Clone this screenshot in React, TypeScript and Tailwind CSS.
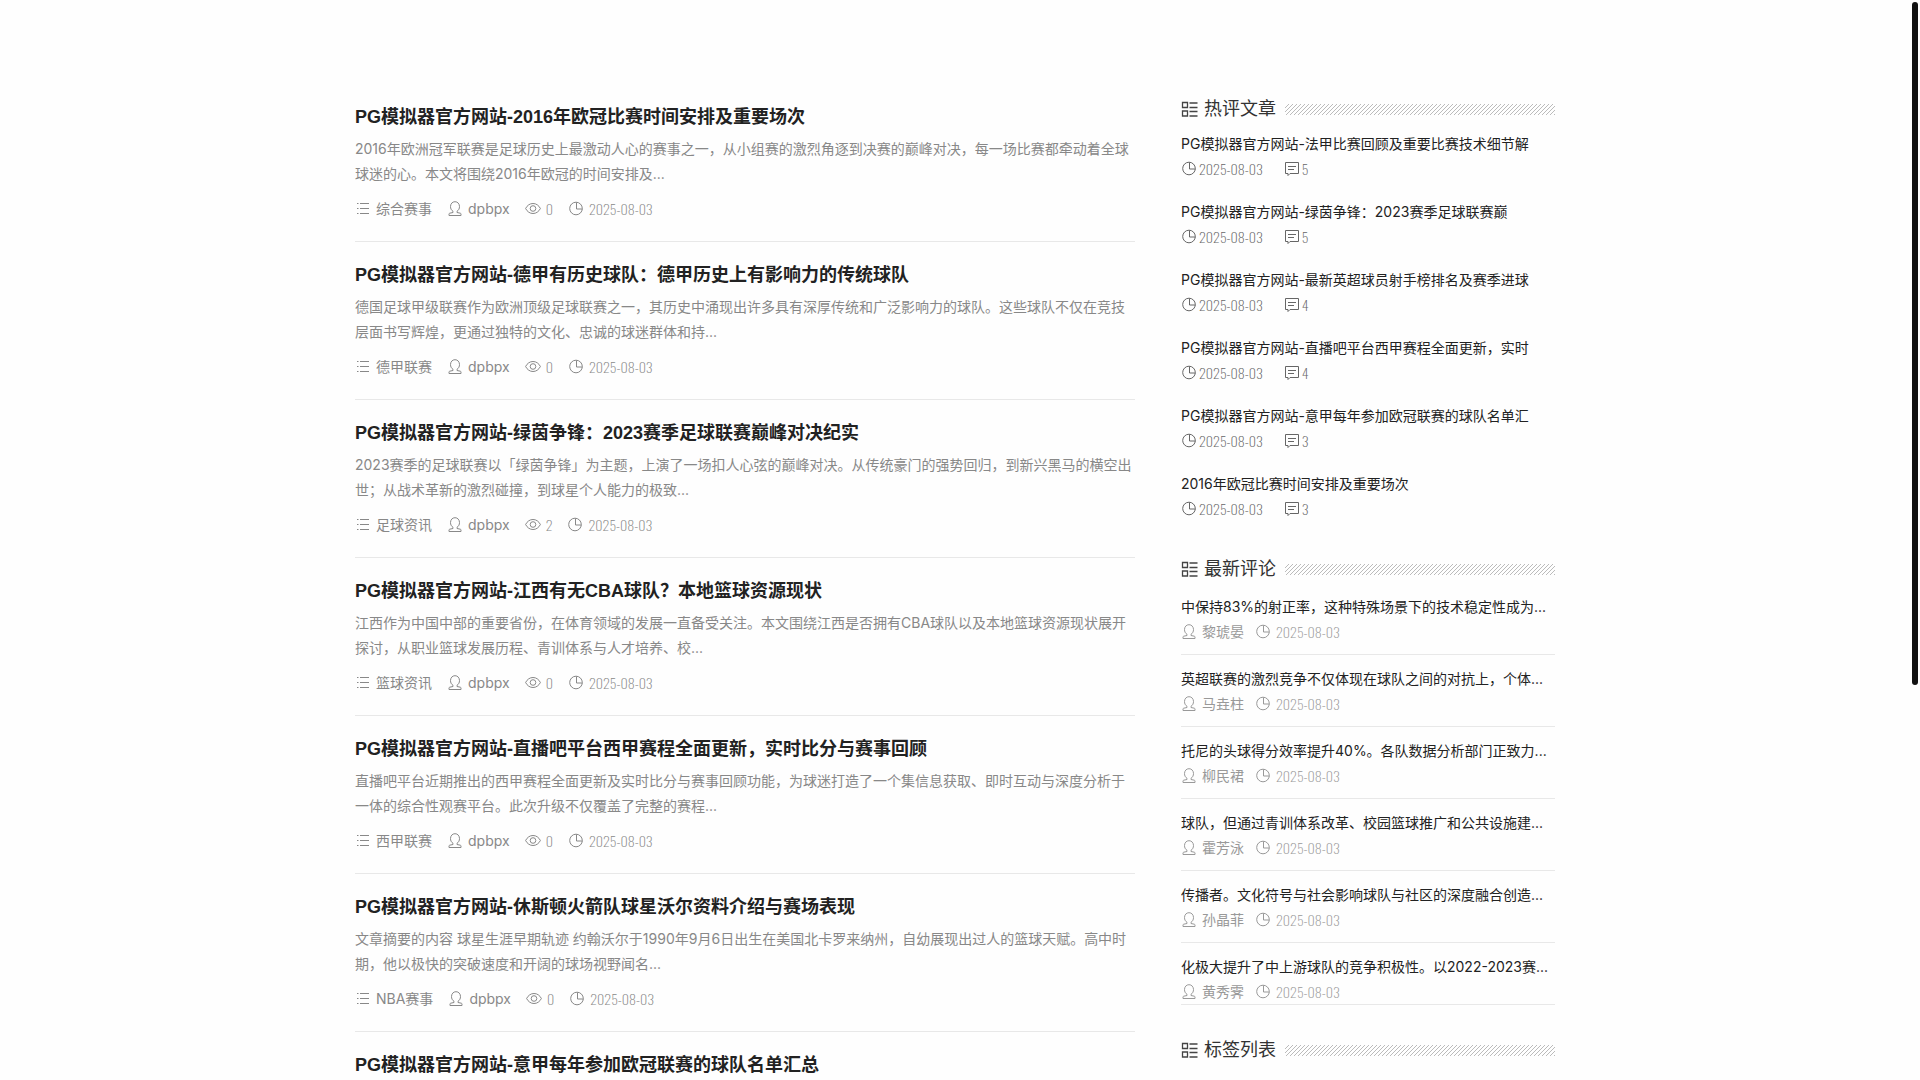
import type { ReactNode } from "react"

const articles = [
  {
    title: "PG模拟器官方网站-2016年欧冠比赛时间安排及重要场次",
    summary: "2016年欧洲冠军联赛是足球历史上最激动人心的赛事之一，从小组赛的激烈角逐到决赛的巅峰对决，每一场比赛都牵动着全球球迷的心。本文将围绕2016年欧冠的时间安排及...",
    category: "综合赛事",
    views: 0,
  },
  {
    title: "PG模拟器官方网站-德甲有历史球队：德甲历史上有影响力的传统球队",
    summary: "德国足球甲级联赛作为欧洲顶级足球联赛之一，其历史中涌现出许多具有深厚传统和广泛影响力的球队。这些球队不仅在竞技层面书写辉煌，更通过独特的文化、忠诚的球迷群体和持...",
    category: "德甲联赛",
    views: 0,
  },
  {
    title: "PG模拟器官方网站-绿茵争锋：2023赛季足球联赛巅峰对决纪实",
    summary: "2023赛季的足球联赛以「绿茵争锋」为主题，上演了一场扣人心弦的巅峰对决。从传统豪门的强势回归，到新兴黑马的横空出世；从战术革新的激烈碰撞，到球星个人能力的极致...",
    category: "足球资讯",
    views: 2,
  },
  {
    title: "PG模拟器官方网站-江西有无CBA球队？本地篮球资源现状",
    summary: "江西作为中国中部的重要省份，在体育领域的发展一直备受关注。本文围绕江西是否拥有CBA球队以及本地篮球资源现状展开探讨，从职业篮球发展历程、青训体系与人才培养、校...",
    category: "篮球资讯",
    views: 0,
  },
  {
    title: "PG模拟器官方网站-直播吧平台西甲赛程全面更新，实时比分与赛事回顾",
    summary: "直播吧平台近期推出的西甲赛程全面更新及实时比分与赛事回顾功能，为球迷打造了一个集信息获取、即时互动与深度分析于一体的综合性观赛平台。此次升级不仅覆盖了完整的赛程...",
    category: "西甲联赛",
    views: 0,
  },
  {
    title: "PG模拟器官方网站-休斯顿火箭队球星沃尔资料介绍与赛场表现",
    summary: "文章摘要的内容 球星生涯早期轨迹 约翰沃尔于1990年9月6日出生在美国北卡罗来纳州，自幼展现出过人的篮球天赋。高中时期，他以极快的突破速度和开阔的球场视野闻名...",
    category: "NBA赛事",
    views: 0,
  },
  {
    title: "PG模拟器官方网站-意甲每年参加欧冠联赛的球队名单汇总",
  },
]

const hotPosts = [
  { title: "PG模拟器官方网站-法甲比赛回顾及重要比赛技术细节解", replies: 5 },
  { title: "PG模拟器官方网站-绿茵争锋：2023赛季足球联赛巅", replies: 5 },
  { title: "PG模拟器官方网站-最新英超球员射手榜排名及赛季进球", replies: 4 },
  { title: "PG模拟器官方网站-直播吧平台西甲赛程全面更新，实时", replies: 4 },
  { title: "PG模拟器官方网站-意甲每年参加欧冠联赛的球队名单汇", replies: 3 },
  { title: "2016年欧冠比赛时间安排及重要场次", replies: 3 },
]

const comments = [
  { text: "中保持83%的射正率，这种特殊场景下的技术稳定性成为...", author: "黎琥晏" },
  { text: "英超联赛的激烈竞争不仅体现在球队之间的对抗上，个体...", author: "马垚柱" },
  { text: "托尼的头球得分效率提升40%。各队数据分析部门正致力...", author: "柳民裙" },
  { text: "球队，但通过青训体系改革、校园篮球推广和公共设施建...", author: "霍芳泳" },
  { text: "传播者。文化符号与社会影响球队与社区的深度融合创造...", author: "孙晶菲" },
  { text: "化极大提升了中上游球队的竞争积极性。以2022-2023赛...", author: "黄秀霁" },
]

const DATE = "2025-08-03"

function Icon({ children }: { children: ReactNode }) {
  return (
    <svg viewBox="0 0 16 16" fill="none" stroke="currentColor" aria-hidden="true" className="size-4 shrink-0">
      {children}
    </svg>
  )
}

const ListIcon = () => (
  <Icon>
    <path d="M2 2.5h1.500M5 2.5h9M2 7.5h1.500M5 7.5h9M2 12.5h1.500M5 12.5h9" />
  </Icon>
)

const UserIcon = () => (
  <Icon>
    <path d="M6 10.300C4.300 9.300 3.500 7.400 3.500 5.600 3.500 2.700 5.400.700 8 .700s4.500 2 4.500 4.900c0 1.800-.8 3.700-2.500 4.700v1.200l3.300.7c.5.100.7.500.7.900v1.400H2v-1.400c0-.4.2-.8.700-.9L6 11.500z" />
  </Icon>
)

const EyeIcon = () => (
  <Icon>
    <path d="M.6 7.500C2.300 4.300 4.800 2.500 8 2.500s5.700 1.800 7.400 5C13.700 10.700 11.200 12.500 8 12.500S2.300 10.700.6 7.500z" />
    <circle cx="8" cy="7.500" r="2.800" />
  </Icon>
)

const ClockIcon = () => (
  <Icon>
    <circle cx="8" cy="7.500" r="6.300" />
    <path d="M8.500 1.500v6.500h6" />
  </Icon>
)

const CommentIcon = () => (
  <Icon>
    <path d="M1.500 1.500h13v11H6l-2 2v-2H1.500zM4 5.500h8M4 8.500h6" />
  </Icon>
)

function WidgetTitle({ children }: { children: ReactNode }) {
  return (
    <div className="flex h-[27px] items-center">
      <svg viewBox="0 0 17 16" fill="none" stroke="currentColor" strokeWidth="1.300" aria-hidden="true" className="mt-px mr-1.5 h-4 w-[17px] shrink-0 text-[#444]">
        <path d="M1.500 1.500h5v5h-5zM1.500 10h5v5h-5zM8.500 2h8M8.500 6.500h8M8.500 10.500h8M8.500 15h8" />
      </svg>
      <h2 className="text-lg leading-[27px] text-[#333]">{children}</h2>
      <div className="mt-0.5 ml-[9px] h-[11px] flex-1 bg-[linear-gradient(135deg,transparent_40%,#bbb_40%,#bbb_60%,transparent_60%)] bg-size-[4px_4px]" />
    </div>
  )
}

function Num({ children }: { children: ReactNode }) {
  return (
    <span className="font-['Oswald','Roboto_Condensed','Roboto',sans-serif] text-sm font-extralight">
      {children}
    </span>
  )
}

export default function App() {
  return (
    <div className="h-screen overflow-hidden bg-[#fefefe] pr-2.5 font-['Inter','Noto_Sans_CJK_SC',sans-serif] text-sm text-[#222]">
      <div className="mx-auto flex w-full max-w-[1200px] gap-[46px] pt-[83px]">
        <main className="min-w-0 flex-1 pt-px">
          {articles.map((article) => (
            <article key={article.title} className="border-b border-[#e8e8e8] pt-[18px] pb-[21px]">
              <h2 className="font-['Liberation_Sans','Noto_Sans_CJK_SC',sans-serif] text-lg leading-[30px] font-bold">
                <a href="#">{article.title}</a>
              </h2>
              {article.summary && (
                <>
                  <p className="mt-1 leading-[25px] text-[#888]">{article.summary}</p>
                  <div className="mt-[11px] flex h-[23px] items-center gap-[15px] text-[#888]">
                    <a href="#" className="flex items-center gap-[5px]"><ListIcon />{article.category}</a>
                    <a href="#" className="flex items-center gap-[5px]"><UserIcon />dpbpx</a>
                    <span className="flex items-center gap-[5px]"><EyeIcon /><Num>{article.views}</Num></span>
                    <span className="flex items-center gap-[5px]"><ClockIcon /><Num>{DATE}</Num></span>
                  </div>
                </>
              )}
            </article>
          ))}
        </main>

        <aside className="w-[374px] shrink-0 pt-3">
          <section>
            <WidgetTitle>热评文章</WidgetTitle>
            <ul className="pt-[9px]">
              {hotPosts.map((post) => (
                <li key={post.title} className="h-[68px]">
                  <a href="#" className="block leading-[26px]">{post.title}</a>
                  <div className="flex h-[23px] items-center gap-[21px] text-[#666]">
                    <span className="flex items-center gap-0.5"><ClockIcon /><Num>{DATE}</Num></span>
                    <span className="flex items-center gap-0.5"><CommentIcon /><Num>{post.replies}</Num></span>
                  </div>
                </li>
              ))}
            </ul>
          </section>

          <section className="pt-4">
            <WidgetTitle>最新评论</WidgetTitle>
            <ul className="pt-3">
              {comments.map((comment) => (
                <li key={comment.text} className="mb-[11px] h-[61px] border-b border-[#e8e8e8] last:h-[51px]">
                  <a href="#" className="block truncate leading-[26px]">{comment.text}</a>
                  <div className="flex h-[23px] items-center gap-[11px] text-[#999]">
                    <span className="flex items-center gap-[5px]"><UserIcon />{comment.author}</span>
                    <span className="flex items-center gap-[5px]"><ClockIcon /><Num>{DATE}</Num></span>
                  </div>
                </li>
              ))}
            </ul>
          </section>

          <section className="pt-5">
            <WidgetTitle>标签列表</WidgetTitle>
          </section>
        </aside>
      </div>
      <div className="fixed top-0.5 right-0.5 h-[683px] w-1.5 rounded-full bg-[#111]" />
    </div>
  )
}
